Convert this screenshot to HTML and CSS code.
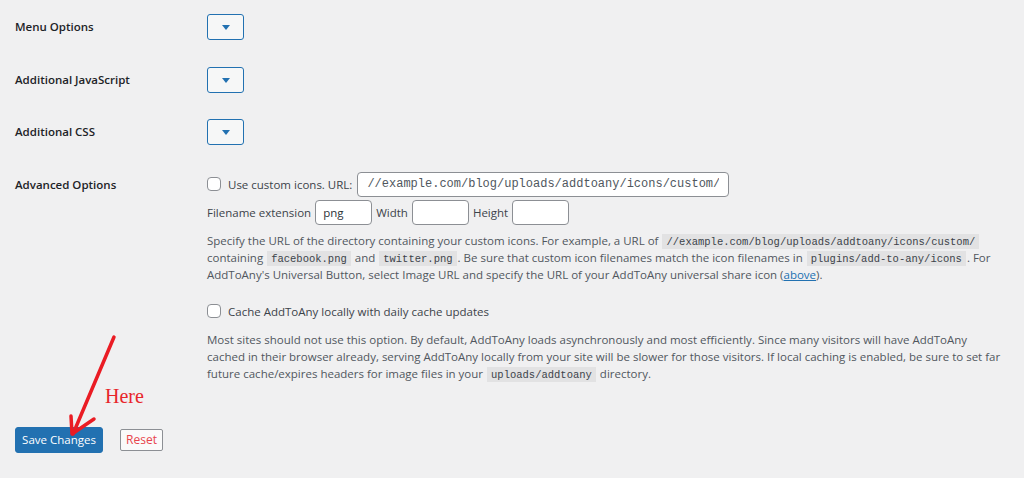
FILE: index.html
```html
<!DOCTYPE html>
<html lang="en">
<head>
    <meta charset="UTF-8">
    <meta name="viewport" content="width=device-width, initial-scale=1.0">
    <title>AddToAny Settings</title>
    <link rel="stylesheet" href="styles.css">
</head>
<body>
    <form class="settings">
        <div class="row">
            <div class="row-label">Menu Options</div>
            <div class="row-field">
                <button type="button" class="toggle"><span class="caret"></span></button>
            </div>
        </div>

        <div class="row">
            <div class="row-label">Additional JavaScript</div>
            <div class="row-field">
                <button type="button" class="toggle"><span class="caret"></span></button>
            </div>
        </div>

        <div class="row">
            <div class="row-label">Additional CSS</div>
            <div class="row-field">
                <button type="button" class="toggle"><span class="caret"></span></button>
            </div>
        </div>

        <div class="row">
            <div class="row-label">Advanced Options</div>
            <div class="row-field">
                <div class="line">
                    <label class="check"><input type="checkbox"> Use custom icons. URL:</label>
                    <input type="text" class="text url" value="//example.com/blog/uploads/addtoany/icons/custom/">
                </div>
                <div class="line">
                    <span>Filename extension</span>
                    <input type="text" class="text small" value="png">
                    <span>Width</span>
                    <input type="text" class="text small">
                    <span>Height</span>
                    <input type="text" class="text small">
                </div>
                <p class="description">
                    Specify the URL of the directory containing your custom icons. For example, a URL of <code>//example.com/blog/uploads/addtoany/icons/custom/</code><br>
                    containing <code>facebook.png</code> and <code>twitter.png</code>. Be sure that custom icon filenames match the icon filenames in <code>plugins/add-to-any/icons</code>. For<br>
                    AddToAny's Universal Button, select Image URL and specify the URL of your AddToAny universal share icon (<a href="#">above</a>).
                </p>

                <div class="line cache">
                    <label class="check"><input type="checkbox"> Cache AddToAny locally with daily cache updates</label>
                </div>
                <p class="description">
                    Most sites should not use this option. By default, AddToAny loads asynchronously and most efficiently. Since many visitors will have AddToAny<br>
                    cached in their browser already, serving AddToAny locally from your site will be slower for those visitors. If local caching is enabled, be sure to set far<br>
                    future cache/expires headers for image files in your <code>uploads/addtoany</code> directory.
                </p>
            </div>
        </div>

        <div class="actions">
            <button type="submit" class="button-primary">Save Changes</button>
            <button type="button" class="button-reset">Reset</button>

            <svg class="note-arrow" width="60" height="110" viewBox="0 0 60 110">
                <path d="M50 4 L9 101" />
                <path d="M7 83 L8 101 L30 86" />
            </svg>
            <span class="note-text">Here</span>
        </div>
    </form>
</body>
</html>
```

FILE: styles.css
```css
body {
    margin: 0;
    background-color: #f0f0f1;
    color: #3c434a;
    font-family: "Open Sans", "Noto Sans", sans-serif;
    font-size: 11.5px;
}

.settings {
    padding: 14px 0 0 15px;
}

.row {
    display: flex;
    align-items: flex-start;
    margin-bottom: 26.5px;
}

.row-label {
    width: 192px;
    flex-shrink: 0;
    line-height: 25px;
    font-weight: 600;
    color: #1d2327;
}

.row-field {
    flex: 1;
}

.toggle {
    display: flex;
    align-items: center;
    justify-content: center;
    width: 37px;
    height: 26px;
    padding: 0;
    border: 1px solid #2271b1;
    border-radius: 3px;
    background-color: #f6f7f7;
}

.caret {
    width: 0;
    height: 0;
    border-left: 4px solid transparent;
    border-right: 4px solid transparent;
    border-top: 5px solid #2271b1;
    margin-top: 1px;
}

.line {
    display: flex;
    align-items: center;
    gap: 4px;
    height: 25px;
    margin-bottom: 3px;
}

.check {
    display: flex;
    align-items: center;
    gap: 7px;
    margin-right: 1px;
}

.check input {
    appearance: none;
    width: 14px;
    height: 14px;
    margin: 0;
    border: 1px solid #8c8f94;
    border-radius: 4px;
    background-color: #fff;
}

.text {
    box-sizing: border-box;
    height: 25px;
    margin: 0;
    border: 1px solid #8c8f94;
    border-radius: 4px;
    background-color: #fff;
    color: #2c3338;
}

.url {
    width: 372px;
    padding: 0 9px;
    font-family: "Liberation Mono", monospace;
    font-size: 12px;
    color: #50575e;
}

.small {
    width: 57px;
    padding: 0 7px;
    font-family: "Open Sans", "Noto Sans", sans-serif;
    font-size: 11.5px;
}

.description {
    margin: 7px 0 16px;
    line-height: 17px;
    color: #50575e;
    white-space: nowrap;
}

.description:last-child {
    margin-bottom: 0;
}

code {
    font-family: "Liberation Mono", monospace;
    font-size: 10.5px;
    line-height: 1;
    padding: 2px 4px 1px;
    margin: 0 1px;
    background-color: #e2e2e3;
    color: #3c434a;
}

a {
    color: #2271b1;
}

.actions {
    position: relative;
    display: flex;
    align-items: center;
    gap: 17px;
    margin-top: 45px;
}

.button-primary {
    height: 26px;
    width: 88px;
    padding: 0;
    border: 1px solid #2271b1;
    border-radius: 3px;
    background-color: #2271b1;
    color: #fff;
    font-family: inherit;
    font-size: 11.5px;
}

.button-reset {
    height: 22px;
    width: 43px;
    padding: 0;
    border: 1px solid #8c8f94;
    border-radius: 2px;
    background-color: #fafafa;
    color: #e8454d;
    font-family: inherit;
    font-size: 12px;
}

.note-arrow {
    position: absolute;
    left: 49px;
    top: -94px;
    fill: none;
    stroke: #ea1c24;
    stroke-width: 3.5;
    stroke-linecap: round;
    stroke-linejoin: round;
}

.note-text {
    position: absolute;
    left: 90px;
    top: -42px;
    font-family: "Liberation Serif", serif;
    font-size: 20px;
    color: #e8262b;
}
```
